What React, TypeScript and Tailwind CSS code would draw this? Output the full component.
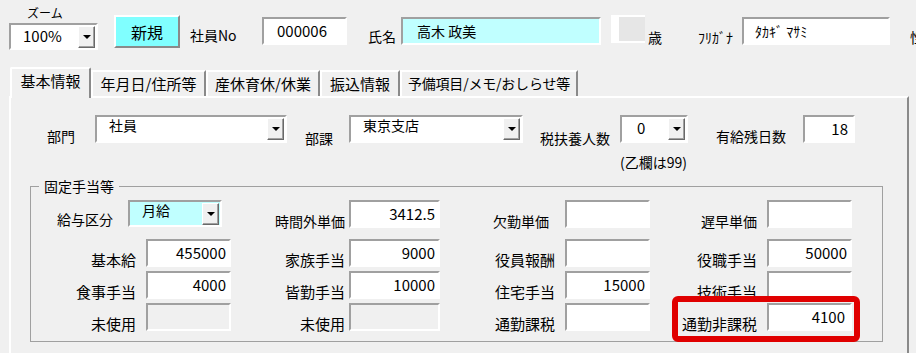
import React from "react";

const sunk =
  "border-2 border-t-[#a0a0a0] border-l-[#a0a0a0] border-b-white border-r-white";

function DropBtn() {
  return (
    <div className="w-[17px] h-[22px] shrink-0 bg-[#f0f0f0] border border-t-white border-l-white border-b-[#696969] border-r-[#696969] shadow-[inset_-1px_-1px_0_#a0a0a0] flex items-center justify-center">
      <div className="w-0 h-0 border-l-[4px] border-r-[4px] border-t-[4px] border-l-transparent border-r-transparent border-t-black" />
    </div>
  );
}

function Combo({
  className,
  text,
  textClass,
}: {
  className: string;
  text: string;
  textClass: string;
}) {
  return (
    <div className={`${sunk} shrink-0 flex justify-between ${className}`}>
      <span className={`whitespace-nowrap ${textClass}`}>{text}</span>
      <div className="mt-[1px] mr-[1px]">
        <DropBtn />
      </div>
    </div>
  );
}

function Num({
  className,
  value,
  disabled,
}: {
  className: string;
  value?: string;
  disabled?: boolean;
}) {
  return (
    <div
      className={`${sunk} shrink-0 h-[28px] flex items-center justify-end pr-[3px] text-[15px] leading-[20px] ${
        disabled ? "bg-[#f0f0f0]" : "bg-white"
      } ${className}`}
    >
      {value}
    </div>
  );
}

function Lbl({ children, className }: { children: React.ReactNode; className: string }) {
  return (
    <span className={`shrink-0 whitespace-nowrap text-[15px] leading-[15px] ${className}`}>
      {children}
    </span>
  );
}

function Lbl14({ children, className }: { children: React.ReactNode; className: string }) {
  return (
    <span className={`shrink-0 whitespace-nowrap text-[14px] leading-[14px] ${className}`}>
      {children}
    </span>
  );
}

export default function App() {
  return (
    <div className="w-[916px] h-[353px] overflow-hidden bg-[#f0f0f0] text-black font-['Noto_Sans_CJK_JP','Noto_Sans_JP',sans-serif]">
      {/* top bar */}
      <div className="flex items-start h-[67px]">
        <div className="ml-[9px] shrink-0 flex flex-col">
          <span className="mt-[7px] pl-[18px] text-[12px] leading-[12px] whitespace-nowrap">ズーム</span>
          <div className={`${sunk} mt-[4px] w-[89px] h-[27px] bg-white flex justify-between`}>
            <span className="pl-[12px] text-[15px] leading-[20px] pt-[1px]">100%</span>
            <div className="mt-[1px] mr-[1px]">
              <DropBtn />
            </div>
          </div>
        </div>
        <div className="ml-[16px] mt-[15px] shrink-0 w-[66px] h-[33px] bg-[#80ffff] border-2 border-t-white border-l-white border-b-[#8a8a8a] border-r-[#8a8a8a] flex items-center justify-center text-[16px] leading-[16px]">
          新規
        </div>
        <Lbl14 className="ml-[10px] w-[72px] mt-[28px]">社員No</Lbl14>
        <div className={`${sunk} shrink-0 mt-[17px] w-[85px] h-[28px] bg-white flex items-center pl-[13px] text-[15px] leading-[20px]`}>
          000006
        </div>
        <Lbl14 className="ml-[21px] w-[33px] mt-[29px]">氏名</Lbl14>
        <div className={`${sunk} shrink-0 mt-[17px] w-[200px] h-[28px] bg-[#c0ffff] flex items-center pl-[14px] text-[14px] leading-[20px]`}>
          高木 政美
        </div>
        <div className="ml-[10px] mt-[15px] shrink-0 w-[34px] h-[28px] bg-[#e6e6e6] border-l-[8px] border-y-2 border-white" />
        <Lbl14 className="ml-[3px] mt-[30px]">歳</Lbl14>
        <Lbl14 className="ml-[36px] w-[44px] mt-[30px]">ﾌﾘｶﾞﾅ</Lbl14>
        <div className={`${sunk} shrink-0 mt-[17px] w-[148px] h-[28px] bg-white flex items-center pl-[11px] text-[14px] leading-[20px] whitespace-nowrap`}>
          ﾀｶｷﾞ ﾏｻﾐ
        </div>
        <Lbl14 className="ml-[20px] mt-[30px]">性別</Lbl14>
      </div>

      {/* tabs */}
      <div className="flex items-end h-[29px] pl-[10px]">
        <div className="relative z-10 -mb-[2px] shrink-0 w-[81px] h-[31px] bg-[#f0f0f0] border-l-2 border-t-2 border-white border-r-2 border-r-[#8a8a8a] rounded-t-[2px] text-center pt-[4px] text-[15px] leading-[15px]">
          基本情報
        </div>
        <div className="shrink-0 w-[115px] h-[26px] border-l-2 border-t-2 border-white border-r-2 border-r-[#8a8a8a] text-center pt-[4px] text-[15px] leading-[15px] whitespace-nowrap">
          年月日/住所等
        </div>
        <div className="shrink-0 w-[114px] h-[26px] border-l-2 border-t-2 border-white border-r-2 border-r-[#8a8a8a] text-center pt-[4px] text-[15px] leading-[15px] whitespace-nowrap">
          産休育休/休業
        </div>
        <div className="shrink-0 w-[80px] h-[26px] border-l-2 border-t-2 border-white border-r-2 border-r-[#8a8a8a] text-center pt-[4px] text-[15px] leading-[15px] whitespace-nowrap">
          振込情報
        </div>
        <div className="shrink-0 w-[178px] h-[26px] border-l-2 border-t-2 border-white border-r-2 border-r-[#8a8a8a] text-center pt-[4px] text-[14px] leading-[15px] tracking-[-0.2px] whitespace-nowrap">
          予備項目/メモ/おしらせ等
        </div>
      </div>

      {/* panel */}
      <div className="ml-[9px] w-[900px] h-[270px] border-t-2 border-l-2 border-white border-r-2 border-r-[#8a8a8a] pt-[17px]">
        <div className="flex items-start">
          <Lbl14 className="ml-[36px] w-[48px] mt-[14px]">部門</Lbl14>
          <Combo className="w-[192px] h-[28px] bg-white" text="社員" textClass="pl-[12px] text-[14px] leading-[16px]" />
          <Lbl14 className="ml-[18px] w-[44px] mt-[16px]">部課</Lbl14>
          <Combo className="w-[174px] h-[28px] bg-white" text="東京支店" textClass="pl-[12px] text-[14px] leading-[16px]" />
          <Lbl14 className="ml-[17px] w-[80px] mt-[16px]">税扶養人数</Lbl14>
          <div className="shrink-0 w-[68px] flex flex-col">
            <Combo className="w-[68px] h-[28px] bg-white" text="0" textClass="pl-[15px] text-[15px] leading-[20px] pt-[1px]" />
            <span className="mt-[12px] text-[14px] leading-[14px] whitespace-nowrap">(乙欄は99)</span>
          </div>
          <Lbl14 className="ml-[28px] w-[87px] mt-[14px]">有給残日数</Lbl14>
          <Num className="w-[52px] pr-[5px]" value="18" />
        </div>

        <fieldset className="ml-[19px] mt-[9px] w-[853px] border border-[#a0a0a0] pt-[6px] pb-[10px]">
          <legend className="ml-[8px] px-[5px] text-[14px] leading-[16px]">固定手当等</legend>

          {/* row 1 */}
          <div className="flex items-end">
            <div className="w-[200px] shrink-0 flex items-end pl-[26px]">
              <Lbl14 className="w-[71px] mb-[2px]">給与区分</Lbl14>
              <Combo className="w-[94px] h-[27px] bg-[#c0ffff] mb-[1px]" text="月給" textClass="pl-[12px] text-[14px] leading-[16px]" />
            </div>
            <div className="w-[209px] shrink-0 flex items-end justify-end">
              <Lbl14 className="mb-[0px] mr-[4px]">時間外単価</Lbl14>
              <Num className="w-[91px]" value="3412.5" />
            </div>
            <div className="w-[210px] shrink-0 flex items-end pl-[53px]">
              <Lbl14 className="w-[72px] mb-[0px]">欠勤単価</Lbl14>
              <Num className="w-[85px]" />
            </div>
            <div className="w-[202px] shrink-0 flex items-end justify-end">
              <Lbl14 className="mr-[10px] mb-[0px]">遅早単価</Lbl14>
              <Num className="w-[85px]" />
            </div>
          </div>

          {/* row 2 */}
          <div className="flex items-end mt-[11px]">
            <div className="w-[200px] shrink-0 flex items-end justify-end">
              <Lbl className="mr-[10px]">基本給</Lbl>
              <Num className="w-[85px]" value="455000" />
            </div>
            <div className="w-[209px] shrink-0 flex items-end justify-end">
              <Lbl className="mr-[4px]">家族手当</Lbl>
              <Num className="w-[91px]" value="9000" />
            </div>
            <div className="w-[210px] shrink-0 flex items-end pl-[55px]">
              <Lbl className="w-[70px]">役員報酬</Lbl>
              <Num className="w-[85px]" />
            </div>
            <div className="w-[202px] shrink-0 flex items-end justify-end">
              <Lbl className="mr-[10px]">役職手当</Lbl>
              <Num className="w-[85px]" value="50000" />
            </div>
          </div>

          {/* row 3 */}
          <div className="flex items-end mt-[4px]">
            <div className="w-[200px] shrink-0 flex items-end justify-end">
              <Lbl className="mr-[10px]">食事手当</Lbl>
              <Num className="w-[85px]" value="4000" />
            </div>
            <div className="w-[209px] shrink-0 flex items-end justify-end">
              <Lbl className="mr-[4px]">皆勤手当</Lbl>
              <Num className="w-[91px]" value="10000" />
            </div>
            <div className="w-[210px] shrink-0 flex items-end pl-[55px]">
              <Lbl className="w-[70px]">住宅手当</Lbl>
              <Num className="w-[85px]" value="15000" />
            </div>
            <div className="w-[202px] shrink-0 flex items-end justify-end">
              <Lbl className="mr-[10px]">技術手当</Lbl>
              <Num className="w-[85px]" />
            </div>
          </div>

          {/* row 4 */}
          <div className="flex items-end mt-[4px]">
            <div className="w-[200px] shrink-0 flex items-end justify-end">
              <Lbl className="mr-[10px]">未使用</Lbl>
              <Num className="w-[85px]" disabled />
            </div>
            <div className="w-[209px] shrink-0 flex items-end justify-end">
              <Lbl className="mr-[4px]">未使用</Lbl>
              <Num className="w-[91px]" disabled />
            </div>
            <div className="w-[210px] shrink-0 flex items-end pl-[55px]">
              <Lbl className="w-[70px]">通勤課税</Lbl>
              <Num className="w-[85px]" />
            </div>
            <div className="relative w-[202px] shrink-0 flex items-end justify-end">
              <Lbl className="mr-[10px]">通勤非課税</Lbl>
              <Num className="w-[85px] pr-[5px]" value="4100" />
              <div className="absolute z-10 left-[22px] top-[-7px] w-[188px] h-[46px] border-[6px] border-[#e00000] rounded-[6px]" />
            </div>
          </div>
        </fieldset>
      </div>
    </div>
  );
}
